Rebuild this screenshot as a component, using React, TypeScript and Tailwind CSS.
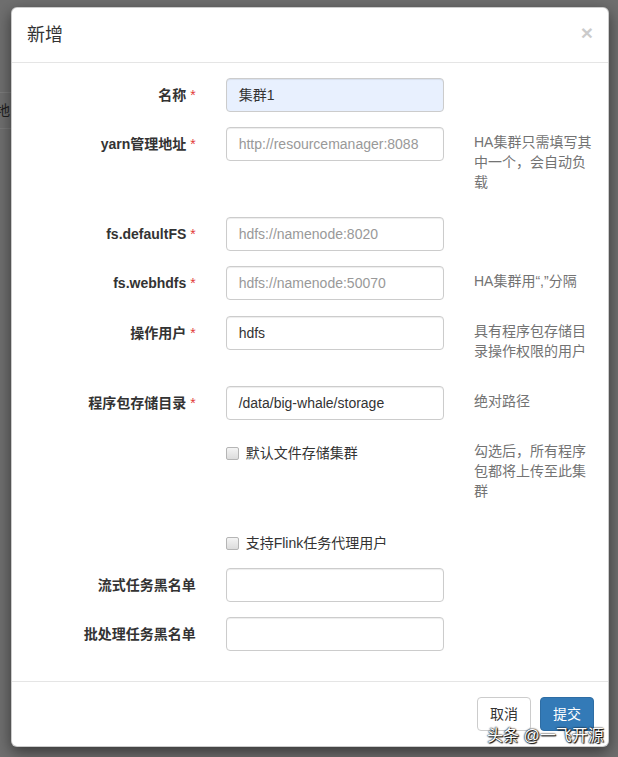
import React from 'react';

const font = "font-['Liberation_Sans','Noto_Sans_CJK_SC',sans-serif]";

type Field = {
  label: string;
  required?: boolean;
  value?: string;
  placeholder?: string;
  help?: string[];
  autofill?: boolean;
};

const fields: Field[] = [
  { label: '名称', required: true, value: '集群1', autofill: true },
  {
    label: 'yarn管理地址',
    required: true,
    placeholder: 'http://resourcemanager:8088',
    help: ['HA集群只需填写其', '中一个，会自动负', '载'],
  },
  { label: 'fs.defaultFS', required: true, placeholder: 'hdfs://namenode:8020' },
  {
    label: 'fs.webhdfs',
    required: true,
    placeholder: 'hdfs://namenode:50070',
    help: ['HA集群用“,”分隔'],
  },
  {
    label: '操作用户',
    required: true,
    value: 'hdfs',
    help: ['具有程序包存储目', '录操作权限的用户'],
  },
  {
    label: '程序包存储目录',
    required: true,
    value: '/data/big-whale/storage',
    help: ['绝对路径'],
  },
];

function Help({ lines }: { lines: string[] }) {
  return (
    <div className="mt-[5px] mb-[10px] text-[#737373]">
      {lines.map((l) => (
        <div key={l} className="whitespace-nowrap">
          {l}
        </div>
      ))}
    </div>
  );
}

function Input({ f }: { f: Field }) {
  return (
    <div
      className={`h-[34px] rounded-[4px] border border-[#ccc] px-[12px] py-[6px] shadow-[inset_0_1px_1px_rgba(0,0,0,0.075)] ${
        f.autofill ? 'bg-[#e8f0fe]' : 'bg-white'
      }`}
    >
      {f.value ? (
        <span className="text-[#333]">{f.value}</span>
      ) : (
        <span className="text-[#999]">{f.placeholder ?? ''}</span>
      )}
    </div>
  );
}

function Row({ f }: { f: Field }) {
  return (
    <div className="flex mb-[15px]">
      <div className="w-4/12 px-[15px] pt-[7px] text-right font-bold text-[#333] whitespace-nowrap">
        {f.label}
        {f.required && <span className="text-[#e23a3a] font-normal"> *</span>}
      </div>
      <div className="w-5/12 px-[15px]">
        <Input f={f} />
      </div>
      <div className="w-3/12 px-[15px]">{f.help && <Help lines={f.help} />}</div>
    </div>
  );
}

function CheckRow({ label, help }: { label: string; help?: string[] }) {
  return (
    <div className="flex mb-[15px]">
      <div className="w-4/12" />
      <div className="w-5/12 px-[15px]">
        <div className="pt-[7px] flex items-start text-[#333]">
          <span className="mt-[4px] w-[13px] h-[13px] rounded-[2px] border border-[#b5b5b5] bg-gradient-to-b from-[#f4f4f4] to-[#dcdcdc] shrink-0" />
          <span className="ml-[7px]">{label}</span>
        </div>
      </div>
      <div className="w-3/12 px-[15px]">{help && <Help lines={help} />}</div>
    </div>
  );
}

export default function App(): JSX.Element {
  return (
    <div className={`relative h-[757px] w-[618px] overflow-hidden bg-[#6f6f6f] ${font} text-[14px] leading-[20px]`}>
      {/* page behind the backdrop, mostly hidden by the modal */}
      <div className="absolute left-0 top-[92px] w-[12px] h-px bg-[#7c7c7c]" />
      <div className="absolute left-0 top-[128px] w-[12px] h-px bg-[#7a7a7a]" />
      <div className="absolute left-[-4px] top-[100px] text-[14px] text-[#1e1e1e]">地</div>

      <div className="relative ml-[11px] mt-[7px] w-[598px] rounded-[6px] border border-[rgba(0,0,0,0.2)] bg-white shadow-[0_5px_15px_rgba(0,0,0,0.5)]">
        {/* Header */}
        <div className="flex items-start justify-between border-b border-[#e5e5e5] p-[15px]">
          <h4 className="text-[18px] leading-[24px] text-[#333]">新增</h4>
          <button className="mt-[-1px] text-[21px] font-bold leading-none text-black opacity-20">×</button>
        </div>

        {/* Body */}
        <div className="py-[15px]">
          {fields.map((f) => (
            <Row key={f.label} f={f} />
          ))}
          <CheckRow label="默认文件存储集群" help={['勾选后，所有程序', '包都将上传至此集', '群']} />
          <CheckRow label="支持Flink任务代理用户" />
          <Row f={{ label: '流式任务黑名单' }} />
          <Row f={{ label: '批处理任务黑名单' }} />
        </div>

        {/* Footer */}
        <div className="flex justify-end gap-[9px] border-t border-[#e5e5e5] py-[15px] pl-[15px] pr-[14px]">
          <button className="h-[34px] rounded-[4px] border border-[#ccc] bg-white px-[12px] text-[#333]">取消</button>
          <button className="h-[34px] rounded-[4px] border border-[#2e6da4] bg-[#337ab7] px-[12px] text-white">提交</button>
        </div>
      </div>

      {/* watermark */}
      <div className="absolute left-[487px] top-[725px] text-[16px] leading-[22px] text-white [text-shadow:0_0_1px_#000,0_0_2px_#000,1px_1px_1px_#000]">
        头条 @一飞开源
      </div>
    </div>
  );
}
